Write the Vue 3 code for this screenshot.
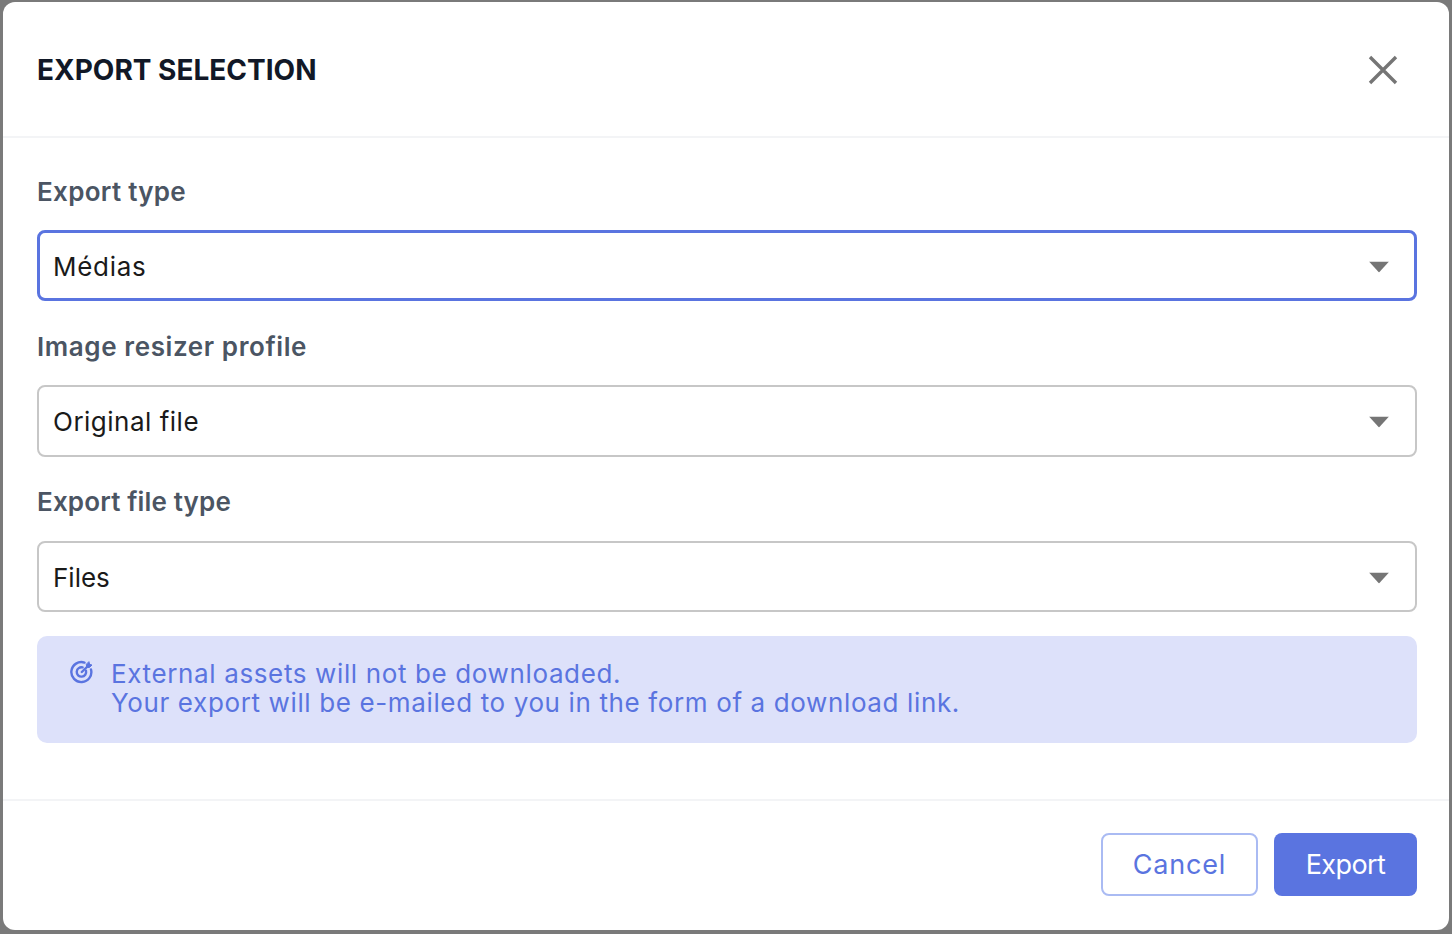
<template>
  <div class="backdrop">
    <div class="modal-box">
      <div class="modal-header">
        <h3>EXPORT SELECTION</h3>
        <button class="btn-close" aria-label="Close">
          <svg width="30" height="30" viewBox="0 0 30 30">
            <path d="M2 2 L28 28 M28 2 L2 28" stroke="#757575" stroke-width="3.4" fill="none" />
          </svg>
        </button>
      </div>

      <div class="modal-body">
        <div v-for="field in fields" :key="field.label" class="form-group" :class="field.cls">
          <label>{{ field.label }}</label>
          <div class="select-wrap" :class="{ focused: field.focused }">
            <select v-model="field.value">
              <option>{{ field.value }}</option>
            </select>
            <svg class="caret" width="20" height="11" viewBox="0 0 20 11">
              <path d="M0 0 H20 L10 11 Z" fill="#757575" />
            </svg>
          </div>
        </div>

        <div class="notice">
          <svg class="notice-icon" width="24" height="24" viewBox="0 0 24 24" fill="none" stroke="#5a74e0" stroke-width="2.4" stroke-linecap="round">
            <path d="M21 9.5 A10 10 0 1 1 14.5 2.6" />
            <path d="M16 10.8 A4.7 4.7 0 1 1 12.6 7.4" />
            <path d="M11.8 12 L19 5" />
            <path d="M16.4 4.6 L16.8 7.2 L19.4 7.6 L22 5 L19.6 4.4 L19 2 Z" fill="#5a74e0" stroke-width="1" stroke-linejoin="round" />
          </svg>
          <div class="notice-text">
            External assets will not be downloaded.<br />
            Your export will be e-mailed to you in the form of a download link.
          </div>
        </div>
      </div>

      <div class="modal-actions">
        <button class="btn-cancel">Cancel</button>
        <button class="btn-export">Export</button>
      </div>
    </div>
  </div>
</template>

<script setup>
import { reactive } from "vue"

const fields = reactive([
  { label: "Export type", value: "Médias", cls: "first", focused: true },
  { label: "Image resizer profile", value: "Original file", cls: "second" },
  { label: "Export file type", value: "Files", cls: "third" }
])
</script>

<style>
html, body {
  margin: 0;
  background: #7a7a7a;
}
</style>

<style scoped>
.backdrop {
  width: 1452px;
  height: 934px;
  box-sizing: border-box;
  padding: 2px 3px 4px 3px;
  background: #7a7a7a;
  font-family: "Inter", "Liberation Sans", sans-serif;
  overflow: hidden;
}

.modal-box {
  height: 100%;
  background: white;
  border-radius: 12px;
  display: flex;
  flex-direction: column;
}

.modal-header {
  height: 136px;
  flex: none;
  box-sizing: border-box;
  border-bottom: 2px solid #f3f4f6;
  padding: 2px 51px 0 34px;
  display: flex;
  align-items: center;
  justify-content: space-between;
}

.modal-header h3 {
  margin: 0;
  font-size: 28px;
  line-height: 36px;
  font-weight: 700;
  color: #111827;
}

.btn-close {
  width: 30px;
  height: 30px;
  padding: 0;
  border: none;
  background: none;
  display: flex;
}

.modal-body {
  flex: 1;
  padding: 38px 32px 0 34px;
}

.form-group {
  margin-bottom: 30px;
}

.form-group.second {
  margin-bottom: 29px;
}

.form-group.second .select-wrap {
  height: 72px;
}

.form-group.third {
  margin-bottom: 24px;
}

.form-group.third label {
  margin-bottom: 23px;
  letter-spacing: 0.15px;
}

.form-group.first label {
  letter-spacing: 0.3px;
}

.form-group label {
  display: block;
  font-size: 26px;
  line-height: 32px;
  font-weight: 600;
  color: #4b5563;
  margin-bottom: 22px;
  letter-spacing: 0.6px;
}

.select-wrap {
  position: relative;
  height: 71px;
  box-sizing: border-box;
  border: 2px solid #c7c7c7;
  border-radius: 8px;
}

.select-wrap.focused {
  border: 3px solid #5a74e0;
}

.select-wrap select {
  appearance: none;
  width: 100%;
  height: 100%;
  border: none;
  outline: none;
  background: transparent;
  padding: 2px 14px 0;
  font-family: inherit;
  font-size: 26px;
  letter-spacing: 0.5px;
  color: #1a1a1a;
}

.form-group.second select {
  padding-top: 0;
}

.form-group.third select {
  letter-spacing: 0;
}

.select-wrap.focused select {
  padding: 2px 13px 0;
  letter-spacing: 0.7px;
}

.caret {
  position: absolute;
  top: calc(50% + 1px);
  right: 26px;
  transform: translateY(-50%);
}

.select-wrap.focused .caret {
  right: 25px;
}

.notice {
  background: #dde1fa;
  border-radius: 10px;
  height: 107px;
  box-sizing: border-box;
  padding: 23px 33px;
  display: flex;
  gap: 17px;
}

.notice-icon {
  flex: none;
  margin-top: 1px;
}

.notice-text {
  font-size: 26px;
  line-height: 29px;
  letter-spacing: 0.63px;
  color: #5a74e0;
}

.modal-actions {
  flex: none;
  height: 131px;
  box-sizing: border-box;
  border-top: 2px solid #f3f4f6;
  padding: 32px 32px 0 0;
  display: flex;
  justify-content: flex-end;
  gap: 16px;
}

.modal-actions button {
  height: 63px;
  border-radius: 8px;
  font-family: inherit;
  font-size: 27px;
  box-sizing: border-box;
}

.btn-cancel {
  width: 157px;
  background: white;
  border: 2px solid #aabbf3;
  color: #5a74e0;
  letter-spacing: 0.8px;
}

.btn-export {
  width: 143px;
  background: #5a74e0;
  border: none;
  color: white;
  letter-spacing: -0.6px;
}
</style>
